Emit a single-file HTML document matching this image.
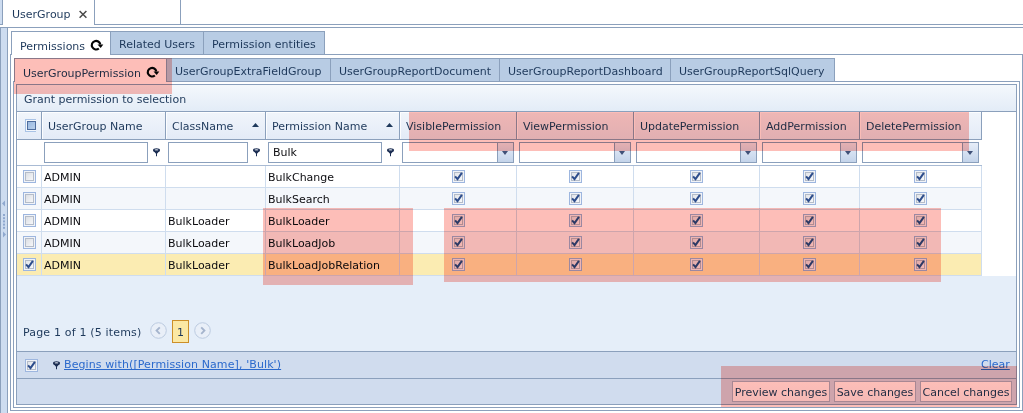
<!DOCTYPE html>
<html><head><meta charset="utf-8"><title>UserGroup</title>
<style>
*{box-sizing:border-box;margin:0;padding:0}
html,body{width:1023px;height:413px;overflow:hidden;background:#fff}
body{position:relative;font:11px "DejaVu Sans","Liberation Sans",sans-serif;color:#1e395b}
.a{position:absolute}
.t{position:absolute;white-space:nowrap;line-height:13px}
.d{color:#0c0c10}
.ln{position:absolute;background:#8ba0bc}
.tab{position:absolute;background:#b8cce4;border:1px solid #8ba0bc;border-bottom:none}
.hl{position:absolute;background:#fdbeb8;mix-blend-mode:multiply}
.hc{position:absolute;top:112px;height:28px;border-right:1px solid #8ba0bc;border-bottom:1px solid #8ba0bc;background:linear-gradient(#f1f5fb,#e3ebf7);box-shadow:inset 1px 1px 0 rgba(255,255,255,.85)}
.fi{position:absolute;top:142px;height:21px;border:1px solid #8ba0bc;background:#fff}
.row{position:absolute;left:17px;width:964px;height:22px;border-bottom:1px solid #cfddee;background:#fff}
.row.alt{background:#f4f7fb}
.row.sel{background:#fbecb2}
.vl{position:absolute;top:166px;height:110px;width:1px;background:#cfddee}
.cb{position:absolute;width:13px;height:13px;border:1px solid #9db6df;background:#f0f3f8;padding:1px}
.cb i{display:block;width:100%;height:100%;border:1px solid #b4bcc9;background:linear-gradient(135deg,#dcdfe4,#f6f7f9)}
.cb.on i{background:linear-gradient(135deg,#e2e5ea,#f7f8fa)}
.cb svg{position:absolute;left:1px;top:1px;width:9px;height:9px}
.btn{position:absolute;top:381px;height:21px;border:1px solid #a9b5cc;background:linear-gradient(#ffffff,#f7f9fc);text-align:center;line-height:21px;white-space:nowrap}
.dd{position:absolute;top:142px;width:17px;height:21px;border:1px solid #8ba0bc;background:linear-gradient(#e6edf8,#c4d4ea)}
.dd:after{content:"";position:absolute;left:4px;top:8px;border:3.5px solid transparent;border-top:4px solid #3f5077;border-bottom:none}
a{color:#2a69cc;text-decoration:underline}
</style></head><body>

<!-- left splitter -->
<div class="a" style="left:0;top:27px;width:8px;height:386px;background:#cddcf0;border-right:1px solid #8ba0bc"></div>
<div class="a" style="left:0;top:0;width:3px;height:25px;background:#cddcf0;border-right:1px solid #8ba0bc"></div>

<div class="ln" style="left:0;top:27px;width:1px;height:386px"></div>
<svg class="a" style="left:1px;top:198px" width="6" height="42" viewBox="0 0 6 42"><g fill="#8fa8cf"><path d="M4 2.5 L4 8.5 L1 5.5 Z"/><path d="M2 33.5 L2 39.5 L5 36.5 Z"/><rect x="2" y="16" width="2" height="2"/><rect x="2" y="19.2" width="2" height="2"/><rect x="2" y="22.4" width="2" height="2"/><rect x="2" y="25.6" width="2" height="2"/><rect x="2" y="28.8" width="2" height="2"/></g></svg>
<!-- top tab strip -->
<div class="ln" style="left:0;top:24px;width:1023px;height:1px"></div>
<div class="a" style="left:3px;top:0;width:92px;height:25px;background:#fff;border-right:1px solid #8ba0bc"></div>
<div class="a" style="left:95px;top:0;width:86px;height:25px;background:#fff;border-right:1px solid #8ba0bc;border-bottom:1px solid #8ba0bc"></div>
<div class="t" style="left:12px;top:8px">UserGroup</div>
<svg class="a" style="left:79px;top:10px" width="9" height="9" viewBox="0 0 9 9"><path d="M0.6 1 L7.4 7.8 M7.4 1 L0.6 7.8" stroke="#4a4a4a" stroke-width="1.5" fill="none"/></svg>
<div class="ln" style="left:0;top:27px;width:1023px;height:1px"></div>

<!-- outer tab panel -->
<div class="a" style="left:10px;top:54px;width:1013px;height:357px;border:1px solid #8ba0bc;background:#fff"></div>
<div class="tab" style="left:11px;top:31px;width:100px;height:24px;background:#fff"></div>
<div class="tab" style="left:110px;top:31px;width:94px;height:23px"></div>
<div class="tab" style="left:203px;top:31px;width:122px;height:23px"></div>
<div class="t" style="left:20px;top:40px">Permissions</div>
<div class="t" style="left:119px;top:38px">Related Users</div>
<div class="t" style="left:212px;top:38px">Permission entities</div>

<!-- inner tab panel -->
<div class="a" style="left:13px;top:81px;width:1007px;height:327px;border:1px solid #8ba0bc;background:#fff"></div>
<div class="tab" style="left:14px;top:58px;width:153px;height:24px;background:#fff"></div>
<div class="tab" style="left:166px;top:58px;width:165px;height:23px"></div>
<div class="tab" style="left:330px;top:58px;width:170px;height:23px"></div>
<div class="tab" style="left:499px;top:58px;width:172px;height:23px"></div>
<div class="tab" style="left:670px;top:58px;width:165px;height:23px"></div>
<div class="t" style="left:23px;top:67px">UserGroupPermission</div>
<div class="t" style="left:175px;top:65px">UserGroupExtraFieldGroup</div>
<div class="t" style="left:339px;top:65px">UserGroupReportDocument</div>
<div class="t" style="left:508px;top:65px">UserGroupReportDashboard</div>
<div class="t" style="left:679px;top:65px">UserGroupReportSqlQuery</div>

<!-- grid -->
<div class="a" style="left:16px;top:84px;width:1001px;height:321px;border:1px solid #8ba0bc;background:#e5eef9"></div>
<div class="a" style="left:17px;top:85px;width:999px;height:27px;background:linear-gradient(#f4f8fc,#e3ecf7);border-bottom:1px solid #8ba0bc"></div>
<div class="t" style="left:24px;top:93px">Grant permission to selection</div>
<!-- header+filter white bg -->
<div class="a" style="left:17px;top:112px;width:999px;height:164px;background:#fff"></div>
<div class="hc" style="left:17px;width:25px"></div>
<div class="hc" style="left:42px;width:124px"></div>
<div class="hc" style="left:166px;width:100px"></div>
<div class="hc" style="left:266px;width:134px"></div>
<div class="hc" style="left:400px;width:117px"></div>
<div class="hc" style="left:517px;width:117px"></div>
<div class="hc" style="left:634px;width:126px"></div>
<div class="hc" style="left:760px;width:100px"></div>
<div class="hc" style="left:860px;width:122px"></div>
<div class="t" style="left:48px;top:120px">UserGroup Name</div>
<div class="t" style="left:172px;top:120px">ClassName</div>
<div class="t" style="left:272px;top:120px">Permission Name</div>
<div class="t" style="left:406px;top:120px">VisiblePermission</div>
<div class="t" style="left:523px;top:120px">ViewPermission</div>
<div class="t" style="left:640px;top:120px">UpdatePermission</div>
<div class="t" style="left:766px;top:120px">AddPermission</div>
<div class="t" style="left:866px;top:120px">DeletePermission</div>
<div class="ln" style="left:17px;top:165px;width:965px;height:1px;background:#a9bbd4"></div>

<svg class="a" style="left:252px;top:123px" width="7" height="4" viewBox="0 0 7 4"><path d="M0 4 L3.5 0 L7 4 Z" fill="#1e395b"/></svg>
<svg class="a" style="left:386px;top:123px" width="7" height="4" viewBox="0 0 7 4"><path d="M0 4 L3.5 0 L7 4 Z" fill="#1e395b"/></svg>
<div class="a" style="left:25px;top:119px;width:11px;height:13px;overflow:hidden"><div style="width:13px;height:13px;border:1px solid #a9c3e6;background:#f4f7fb;padding:1px"><div style="width:100%;height:100%;border:1px solid #4f6d9d;background:linear-gradient(135deg,#9ab9e0,#b9d0ec)"></div></div></div>
<div class="fi" style="left:44px;width:104px"></div>
<svg class="a" style="left:153px;top:147.5px" width="8" height="9" viewBox="0 0 8 9"><ellipse cx="3.5" cy="2.2" rx="3.5" ry="1.9" fill="#1b2d52"/><ellipse cx="3.5" cy="1.9" rx="1.9" ry="0.7" fill="#e8edf5"/><path d="M0.3 2.8 L6.7 2.8 L4 5.8 L4 8.3 L3 8.3 L3 5.8 Z" fill="#1b2d52"/></svg>
<div class="fi" style="left:168px;width:80px"></div>
<svg class="a" style="left:253px;top:147.5px" width="8" height="9" viewBox="0 0 8 9"><ellipse cx="3.5" cy="2.2" rx="3.5" ry="1.9" fill="#1b2d52"/><ellipse cx="3.5" cy="1.9" rx="1.9" ry="0.7" fill="#e8edf5"/><path d="M0.3 2.8 L6.7 2.8 L4 5.8 L4 8.3 L3 8.3 L3 5.8 Z" fill="#1b2d52"/></svg>
<div class="fi" style="left:268px;width:114px"></div>
<svg class="a" style="left:387px;top:147.5px" width="8" height="9" viewBox="0 0 8 9"><ellipse cx="3.5" cy="2.2" rx="3.5" ry="1.9" fill="#1b2d52"/><ellipse cx="3.5" cy="1.9" rx="1.9" ry="0.7" fill="#e8edf5"/><path d="M0.3 2.8 L6.7 2.8 L4 5.8 L4 8.3 L3 8.3 L3 5.8 Z" fill="#1b2d52"/></svg>
<div class="t d" style="left:273px;top:146px">Bulk</div>
<div class="fi" style="left:402px;width:112px"></div>
<div class="dd" style="left:497px"></div>
<div class="fi" style="left:519px;width:112px"></div>
<div class="dd" style="left:614px"></div>
<div class="fi" style="left:636px;width:121px"></div>
<div class="dd" style="left:740px"></div>
<div class="fi" style="left:762px;width:95px"></div>
<div class="dd" style="left:840px"></div>
<div class="fi" style="left:862px;width:117px"></div>
<div class="dd" style="left:962px"></div>
<div class="row " style="top:166px"></div>
<div class="t d" style="left:44px;top:171px">ADMIN</div>
<div class="t d" style="left:268px;top:171px">BulkChange</div>
<div class="cb" style="left:23px;top:170px"><i></i></div>
<div class="cb on" style="left:452px;top:170px"><i></i><svg viewBox="0 0 9 9"><path d="M1.1 4.3 L3.5 7.1 L7.9 0.9" stroke="#2d4d8c" stroke-width="2" fill="none"/></svg></div>
<div class="cb on" style="left:569px;top:170px"><i></i><svg viewBox="0 0 9 9"><path d="M1.1 4.3 L3.5 7.1 L7.9 0.9" stroke="#2d4d8c" stroke-width="2" fill="none"/></svg></div>
<div class="cb on" style="left:690px;top:170px"><i></i><svg viewBox="0 0 9 9"><path d="M1.1 4.3 L3.5 7.1 L7.9 0.9" stroke="#2d4d8c" stroke-width="2" fill="none"/></svg></div>
<div class="cb on" style="left:803px;top:170px"><i></i><svg viewBox="0 0 9 9"><path d="M1.1 4.3 L3.5 7.1 L7.9 0.9" stroke="#2d4d8c" stroke-width="2" fill="none"/></svg></div>
<div class="cb on" style="left:914px;top:170px"><i></i><svg viewBox="0 0 9 9"><path d="M1.1 4.3 L3.5 7.1 L7.9 0.9" stroke="#2d4d8c" stroke-width="2" fill="none"/></svg></div>
<div class="row alt" style="top:188px"></div>
<div class="t d" style="left:44px;top:193px">ADMIN</div>
<div class="t d" style="left:268px;top:193px">BulkSearch</div>
<div class="cb" style="left:23px;top:192px"><i></i></div>
<div class="cb on" style="left:452px;top:192px"><i></i><svg viewBox="0 0 9 9"><path d="M1.1 4.3 L3.5 7.1 L7.9 0.9" stroke="#2d4d8c" stroke-width="2" fill="none"/></svg></div>
<div class="cb on" style="left:569px;top:192px"><i></i><svg viewBox="0 0 9 9"><path d="M1.1 4.3 L3.5 7.1 L7.9 0.9" stroke="#2d4d8c" stroke-width="2" fill="none"/></svg></div>
<div class="cb on" style="left:690px;top:192px"><i></i><svg viewBox="0 0 9 9"><path d="M1.1 4.3 L3.5 7.1 L7.9 0.9" stroke="#2d4d8c" stroke-width="2" fill="none"/></svg></div>
<div class="cb on" style="left:803px;top:192px"><i></i><svg viewBox="0 0 9 9"><path d="M1.1 4.3 L3.5 7.1 L7.9 0.9" stroke="#2d4d8c" stroke-width="2" fill="none"/></svg></div>
<div class="cb on" style="left:914px;top:192px"><i></i><svg viewBox="0 0 9 9"><path d="M1.1 4.3 L3.5 7.1 L7.9 0.9" stroke="#2d4d8c" stroke-width="2" fill="none"/></svg></div>
<div class="row " style="top:210px"></div>
<div class="t d" style="left:44px;top:215px">ADMIN</div>
<div class="t d" style="left:168px;top:215px">BulkLoader</div>
<div class="t d" style="left:268px;top:215px">BulkLoader</div>
<div class="cb" style="left:23px;top:214px"><i></i></div>
<div class="cb on" style="left:452px;top:214px"><i></i><svg viewBox="0 0 9 9"><path d="M1.1 4.3 L3.5 7.1 L7.9 0.9" stroke="#2d4d8c" stroke-width="2" fill="none"/></svg></div>
<div class="cb on" style="left:569px;top:214px"><i></i><svg viewBox="0 0 9 9"><path d="M1.1 4.3 L3.5 7.1 L7.9 0.9" stroke="#2d4d8c" stroke-width="2" fill="none"/></svg></div>
<div class="cb on" style="left:690px;top:214px"><i></i><svg viewBox="0 0 9 9"><path d="M1.1 4.3 L3.5 7.1 L7.9 0.9" stroke="#2d4d8c" stroke-width="2" fill="none"/></svg></div>
<div class="cb on" style="left:803px;top:214px"><i></i><svg viewBox="0 0 9 9"><path d="M1.1 4.3 L3.5 7.1 L7.9 0.9" stroke="#2d4d8c" stroke-width="2" fill="none"/></svg></div>
<div class="cb on" style="left:914px;top:214px"><i></i><svg viewBox="0 0 9 9"><path d="M1.1 4.3 L3.5 7.1 L7.9 0.9" stroke="#2d4d8c" stroke-width="2" fill="none"/></svg></div>
<div class="row alt" style="top:232px"></div>
<div class="t d" style="left:44px;top:237px">ADMIN</div>
<div class="t d" style="left:168px;top:237px">BulkLoader</div>
<div class="t d" style="left:268px;top:237px">BulkLoadJob</div>
<div class="cb" style="left:23px;top:236px"><i></i></div>
<div class="cb on" style="left:452px;top:236px"><i></i><svg viewBox="0 0 9 9"><path d="M1.1 4.3 L3.5 7.1 L7.9 0.9" stroke="#2d4d8c" stroke-width="2" fill="none"/></svg></div>
<div class="cb on" style="left:569px;top:236px"><i></i><svg viewBox="0 0 9 9"><path d="M1.1 4.3 L3.5 7.1 L7.9 0.9" stroke="#2d4d8c" stroke-width="2" fill="none"/></svg></div>
<div class="cb on" style="left:690px;top:236px"><i></i><svg viewBox="0 0 9 9"><path d="M1.1 4.3 L3.5 7.1 L7.9 0.9" stroke="#2d4d8c" stroke-width="2" fill="none"/></svg></div>
<div class="cb on" style="left:803px;top:236px"><i></i><svg viewBox="0 0 9 9"><path d="M1.1 4.3 L3.5 7.1 L7.9 0.9" stroke="#2d4d8c" stroke-width="2" fill="none"/></svg></div>
<div class="cb on" style="left:914px;top:236px"><i></i><svg viewBox="0 0 9 9"><path d="M1.1 4.3 L3.5 7.1 L7.9 0.9" stroke="#2d4d8c" stroke-width="2" fill="none"/></svg></div>
<div class="row sel" style="top:254px"></div>
<div class="t d" style="left:44px;top:259px">ADMIN</div>
<div class="t d" style="left:168px;top:259px">BulkLoader</div>
<div class="t d" style="left:268px;top:259px">BulkLoadJobRelation</div>
<div class="cb on" style="left:23px;top:258px"><i></i><svg viewBox="0 0 9 9"><path d="M1.1 4.3 L3.5 7.1 L7.9 0.9" stroke="#2d4d8c" stroke-width="2" fill="none"/></svg></div>
<div class="cb on" style="left:452px;top:258px"><i></i><svg viewBox="0 0 9 9"><path d="M1.1 4.3 L3.5 7.1 L7.9 0.9" stroke="#2d4d8c" stroke-width="2" fill="none"/></svg></div>
<div class="cb on" style="left:569px;top:258px"><i></i><svg viewBox="0 0 9 9"><path d="M1.1 4.3 L3.5 7.1 L7.9 0.9" stroke="#2d4d8c" stroke-width="2" fill="none"/></svg></div>
<div class="cb on" style="left:690px;top:258px"><i></i><svg viewBox="0 0 9 9"><path d="M1.1 4.3 L3.5 7.1 L7.9 0.9" stroke="#2d4d8c" stroke-width="2" fill="none"/></svg></div>
<div class="cb on" style="left:803px;top:258px"><i></i><svg viewBox="0 0 9 9"><path d="M1.1 4.3 L3.5 7.1 L7.9 0.9" stroke="#2d4d8c" stroke-width="2" fill="none"/></svg></div>
<div class="cb on" style="left:914px;top:258px"><i></i><svg viewBox="0 0 9 9"><path d="M1.1 4.3 L3.5 7.1 L7.9 0.9" stroke="#2d4d8c" stroke-width="2" fill="none"/></svg></div>
<div class="vl" style="left:41px"></div>
<div class="vl" style="left:165px"></div>
<div class="vl" style="left:265px"></div>
<div class="vl" style="left:399px"></div>
<div class="vl" style="left:516px"></div>
<div class="vl" style="left:633px"></div>
<div class="vl" style="left:759px"></div>
<div class="vl" style="left:859px"></div>
<div class="vl" style="left:981px"></div>
<div class="t" style="left:23px;top:326px;letter-spacing:.17px">Page 1 of 1 (5 items)</div>
<svg class="a" style="left:150px;top:322px" width="17" height="17" viewBox="0 0 17 17"><circle cx="8.5" cy="8.5" r="7.8" fill="#e9eff8" stroke="#bccbe0" stroke-width="1"/><path d="M9.8 5.4 L6.6 8.6 L9.8 11.8" stroke="#a5b4cd" stroke-width="1.9" fill="none"/></svg>
<svg class="a" style="left:194px;top:322px" width="17" height="17" viewBox="0 0 17 17"><circle cx="8.5" cy="8.5" r="7.8" fill="#e9eff8" stroke="#bccbe0" stroke-width="1"/><path d="M7.2 5.4 L10.4 8.6 L7.2 11.8" stroke="#a5b4cd" stroke-width="1.9" fill="none"/></svg>
<div class="a" style="left:172px;top:320px;width:17px;height:23px;border:1px solid #cc8f29;background:#fbe8a4;text-align:center;line-height:24px">1</div>
<div class="a" style="left:17px;top:351px;width:999px;height:28px;background:#d0dcee;border-top:1px solid #8ba0bc;border-bottom:1px solid #8ba0bc"></div>
<div class="cb on" style="left:25px;top:359px"><i></i><svg viewBox="0 0 9 9"><path d="M1.1 4.3 L3.5 7.1 L7.9 0.9" stroke="#2d4d8c" stroke-width="2" fill="none"/></svg></div>
<svg class="a" style="left:53px;top:360.5px" width="8" height="9" viewBox="0 0 8 9"><ellipse cx="3.5" cy="2.2" rx="3.5" ry="1.9" fill="#1b2d52"/><ellipse cx="3.5" cy="1.9" rx="1.9" ry="0.7" fill="#e8edf5"/><path d="M0.3 2.8 L6.7 2.8 L4 5.8 L4 8.3 L3 8.3 L3 5.8 Z" fill="#1b2d52"/></svg>
<div class="t" style="left:64px;top:358px;letter-spacing:.1px"><a>Begins with([Permission Name], 'Bulk')</a></div>
<div class="t" style="left:981px;top:358px"><a>Clear</a></div>
<div class="a" style="left:17px;top:379px;width:999px;height:25px;background:#d0dcee"></div>
<div class="btn" style="left:732px;width:98px">Preview changes</div>
<div class="btn" style="left:834px;width:82px">Save changes</div>
<div class="btn" style="left:920px;width:92px">Cancel changes</div>
<svg class="a" style="left:90px;top:39px" width="14" height="13" viewBox="0 0 14 13"><g transform="translate(0,0.4)"><path d="M8.86 9.09 A4.3 4.3 0 1 1 10.33 5.05" stroke="#050505" stroke-width="2.1" fill="none"/><path d="M7.5 5.1 L13.3 5.1 L10.7 8.7 Z" fill="#050505"/></g></svg>
<svg class="a" style="left:146px;top:66px" width="14" height="13" viewBox="0 0 14 13"><g transform="translate(0,0.4)"><path d="M8.86 9.09 A4.3 4.3 0 1 1 10.33 5.05" stroke="#050505" stroke-width="2.1" fill="none"/><path d="M7.5 5.1 L13.3 5.1 L10.7 8.7 Z" fill="#050505"/></g></svg>
<div class="hl" style="left:14px;top:58px;width:158px;height:36px"></div>
<div class="hl" style="left:409px;top:112px;width:560px;height:39px"></div>
<div class="hl" style="left:263px;top:208px;width:150px;height:77px"></div>
<div class="hl" style="left:444px;top:208px;width:497px;height:74px"></div>
<div class="hl" style="left:721px;top:366px;width:296px;height:41px"></div>
</body></html>
